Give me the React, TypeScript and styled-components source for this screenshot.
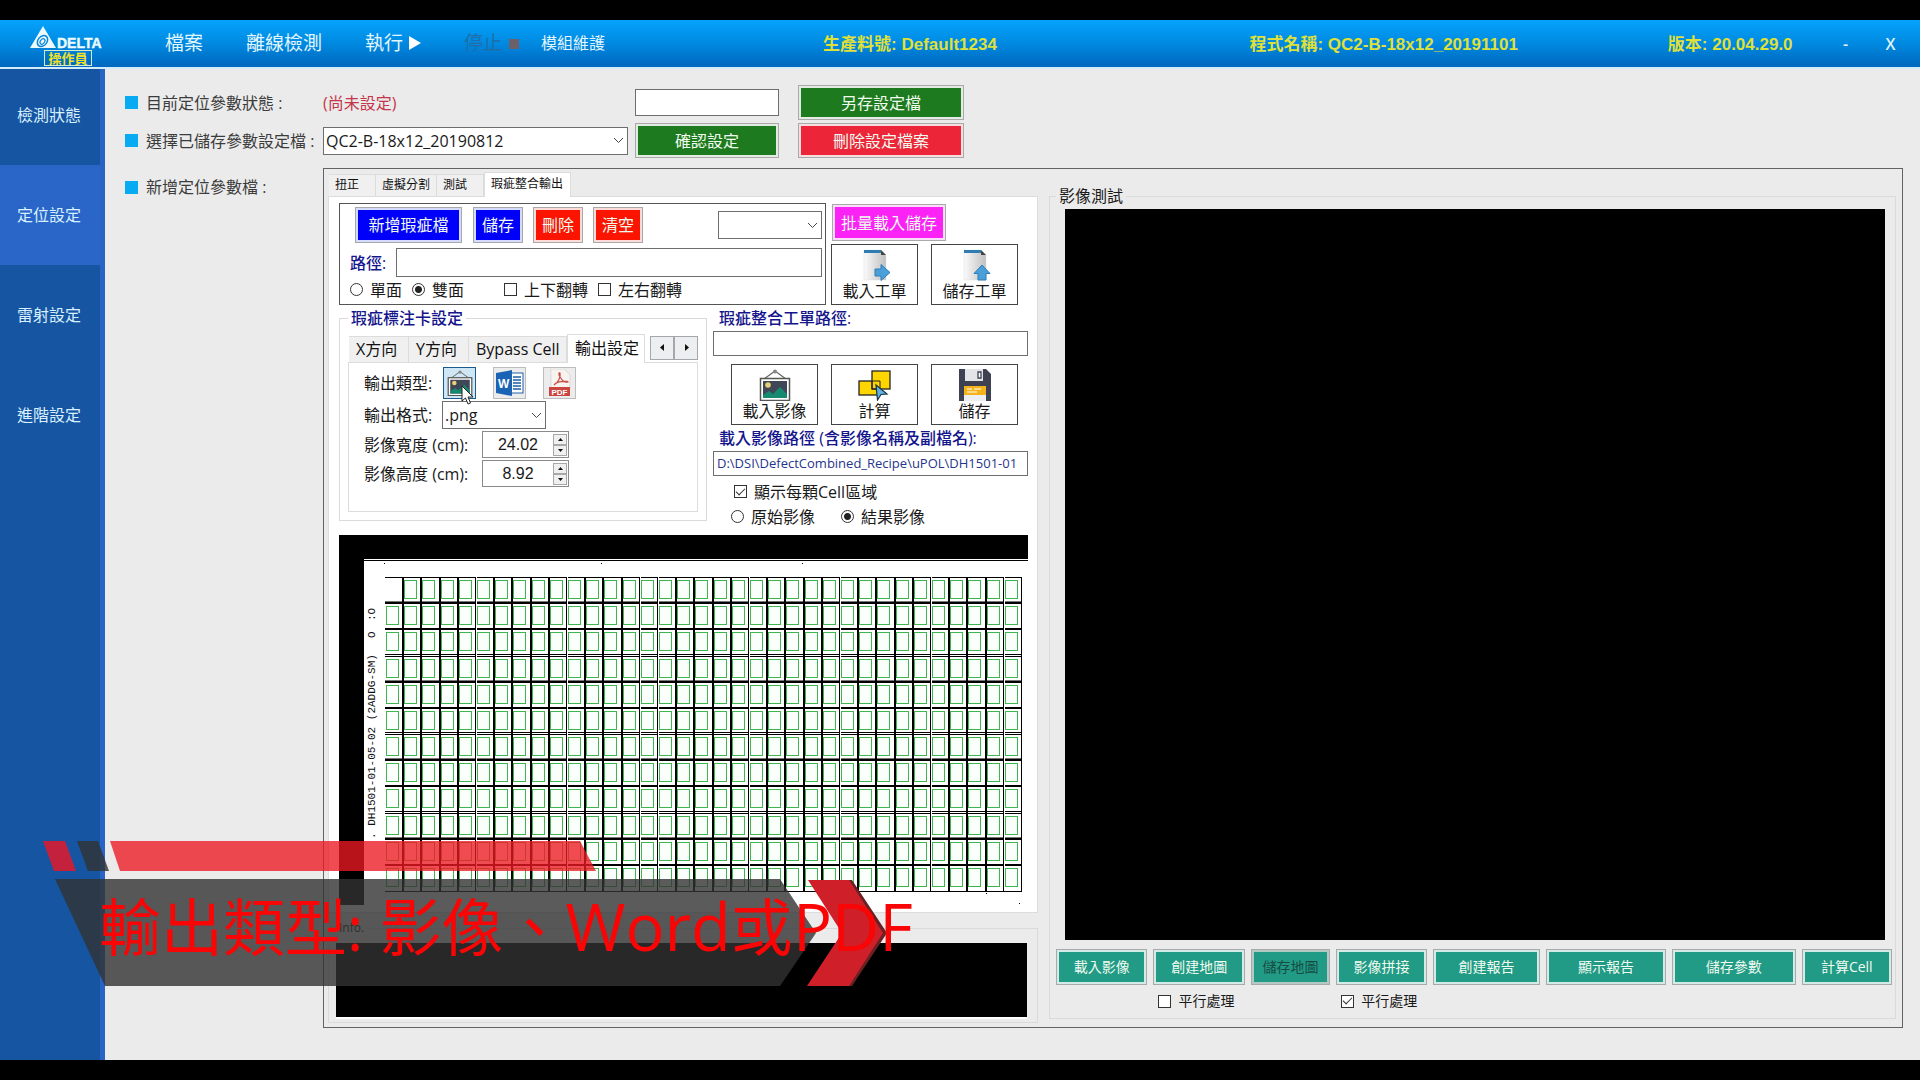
import React, { useState } from "react";
import styled, { createGlobalStyle, css } from "styled-components";

const UI_FONT = `"Open Sans", "Noto Sans CJK TC", sans-serif`;
const ARIAL_FONT = `"Liberation Sans", "Noto Sans CJK TC", sans-serif`;
const NAVY = "#14148c";

const GlobalStyle = createGlobalStyle`
  *, *::before, *::after { box-sizing: border-box; }
  body { margin: 0; background: #000; font-family: ${UI_FONT}; font-size: 16px; line-height: 24px; color: #1a1a1a; }
  button, input, select { font: inherit; color: inherit; margin: 0; }
  button { cursor: pointer; }
`;

const Screen = styled.div`
  position: relative;
  display: flex;
  flex-direction: column;
  min-height: 100vh;
  padding: 20px 0;
  background: #000;
`;

/* ---------- header ---------- */
const Header = styled.header`
  display: flex;
  align-items: center;
  height: 49px;
  padding-right: 7px;
  background: linear-gradient(#05a3fc, #0089e0 50%, #0067be);
  border-bottom: 2px solid #d3ecfa;
`;

const Brand = styled.div`
  display: flex;
  flex-direction: column;
  align-items: center;
  width: 132px;
  height: 47px;
  padding-top: 6px;
`;

const RoleBadge = styled.span`
  margin-left: 4px;
  padding: 0 3px;
  border: 1px solid #d8ecc8;
  font-size: 13px;
  line-height: 14px;
  font-weight: 700;
  color: #f0e02a;
`;

const Menu = styled.nav`
  display: flex;
  align-items: center;
  gap: 43px;
  padding: 0 0 2px 33px;
`;

const MenuButton = styled.button<{ $small?: boolean }>`
  display: flex;
  align-items: center;
  gap: 6px;
  padding: 0;
  border: 0;
  background: none;
  color: #e2f6ff;
  font-size: ${(p) => (p.$small ? 16 : 19)}px;
  margin-left: ${(p) => (p.$small ? -22 : 0)}px;
  white-space: nowrap;
  &:disabled { color: #1f6ea8; }
`;

const JobInfo = styled.div`
  flex: 1;
  display: grid;
  grid-template-columns: 426fr 418fr 155fr;
  padding-left: 218px;
  padding-top: 3px;
  font: 700 17px/24px ${ARIAL_FONT};
  color: #dfe03a;
  white-space: nowrap;
`;

const WindowButton = styled.button`
  width: 45px;
  padding: 0;
  border: 0;
  background: none;
  color: #dff2ff;
  font-weight: 600;
`;

/* ---------- body ---------- */
const Body = styled.div`
  flex: 1;
  display: flex;
  background: #ebebeb;
`;

const Sidebar = styled.nav`
  flex: none;
  width: 105px;
  display: flex;
  flex-direction: column;
  background: #1655a2;
  border-right: 5px solid #2a63c6;
`;

const SideButton = styled.button<{ $active?: boolean }>`
  height: 100px;
  padding: 0 2px 1px 0;
  border: 0;
  background: ${(p) => (p.$active ? "#2a66c8" : "transparent")};
  color: #d9f1ff;
  &:first-child { height: 96px; padding-bottom: 5px; }
`;

const Main = styled.main`
  flex: 1;
  min-width: 0;
  display: flex;
  flex-direction: column;
  gap: 10px;
  padding: 16px 17px 32px 20px;
`;

const Settings = styled.div`
  display: grid;
  grid-template-columns: 191px 305px 144px 178px;
  grid-template-rows: 35px 35px;
  gap: 3px 7px;
  align-items: center;
`;

const BulletLabel = styled.label`
  display: flex;
  align-items: center;
  gap: 8px;
  color: #3c3c3c;
  white-space: nowrap;
  &::before { content: ""; width: 13px; height: 13px; background: #06abf2; }
`;

const SectionLabel = styled(BulletLabel)`
  flex: none;
  width: 198px;
  height: 38px;
`;

const StatusText = styled.output`
  color: #c4364a;
`;

const SideAction = styled.div`
  padding-left: 12px;
  display: grid;
`;

const field = css`
  border: 1px solid #6e6e6e;
  border-radius: 0;
  background: #fff;
  outline: none;
`;

const TextField = styled.input<{ $h: number; $path?: boolean }>`
  ${field}
  width: 100%;
  min-width: 0;
  height: ${(p) => p.$h}px;
  padding: 0 3px;
  ${(p) => p.$path && css`padding-bottom: 2px; font-size: 13px; color: #26358c;`}
`;

const ComboWrap = styled.div<{ $w?: number }>`
  display: grid;
  align-items: center;
  width: ${(p) => (p.$w ? `${p.$w}px` : "100%")};
  > * { grid-area: 1 / 1; }
  > svg { justify-self: end; margin-right: 4px; pointer-events: none; }
`;

const ComboSelect = styled.select`
  ${field}
  appearance: none;
  width: 100%;
  height: 28px;
  padding: 0 18px 0 2px;
`;

const Btn = styled.button<{ $bg: string; $ring: string; $h?: number; $size?: number }>`
  height: ${(p) => p.$h ?? 35}px;
  padding: 0 5px;
  border: 1px solid #a9a9a9;
  background: ${(p) => p.$bg};
  box-shadow: inset 0 0 0 2px ${(p) => p.$ring};
  color: #f0fbf0;
  font-size: ${(p) => p.$size ?? 16}px;
  white-space: nowrap;
  &:disabled { color: #174c42; box-shadow: inset 0 0 0 2px #b4c8c4; }
`;

/* ---------- work area ---------- */
const WorkRow = styled.div`
  flex: 1;
  display: flex;
`;

const WorkBox = styled.section`
  flex: 1;
  min-width: 0;
  display: flex;
  gap: 11px;
  padding: 3px 6px 4px 4px;
  border: 1px solid #636363;
`;

const LeftColumn = styled.div`
  flex: none;
  width: 710px;
  display: flex;
  flex-direction: column;
`;

const TabStrip = styled.div<{ $h: number }>`
  display: flex;
  align-items: flex-end;
  height: ${(p) => p.$h}px;
  padding-left: 1px;
`;

const Tab = styled.button<{ $w: number; $active?: boolean; $large?: boolean }>`
  position: relative;
  width: ${(p) => p.$w}px;
  height: ${(p) => (p.$large ? 26 : 22) + (p.$active ? 3 : 0)}px;
  margin-bottom: ${(p) => (p.$active ? -1 : 0)}px;
  padding: 0 ${(p) => (p.$large ? 7 : 6)}px 2px;
  border: 1px solid #dcdcdc;
  border-left-width: ${(p) => (p.$active ? 1 : 0)}px;
  border-bottom: 0;
  background: ${(p) => (p.$active ? "#fff" : "#f0f0f0")};
  font-size: ${(p) => (p.$large ? 16 : 12)}px;
  line-height: 20px;
  text-align: left;
  white-space: nowrap;
  color: #111;
`;

const TabPage = styled.div`
  padding: 6px 9px 7px 10px;
  border: 1px solid #dcdcdc;
  background: #fff;
`;

const TopRow = styled.div`
  display: flex;
  gap: 5px;
  height: 102px;
`;

const FilePanel = styled.section`
  width: 487px;
  height: 102px;
  padding: 3px 3px 0 10px;
  border: 1px solid #555;
`;

const FileButtons = styled.div`
  display: flex;
  align-items: center;
  gap: 10px;
  padding-left: 5px;
  > :nth-child(1) { width: 107px; margin-right: 1px; }
  > :nth-child(n + 2) { width: 50px; }
  > :last-child { width: 104px; margin-left: auto; }
`;

const PathRow = styled.div`
  display: flex;
  align-items: center;
  gap: 10px;
  margin-top: 5px;
`;

const NavyLabel = styled.label`
  flex: none;
  color: ${NAVY};
  font-weight: 500;
  white-space: nowrap;
`;

const Ticks = styled.div<{ $pad: number; $gap: number }>`
  display: flex;
  align-items: center;
  gap: ${(p) => p.$gap}px;
  height: 25px;
  padding-left: ${(p) => p.$pad}px;
`;

const TickLabel = styled.label<{ $small?: boolean; $pad?: number }>`
  display: flex;
  align-items: center;
  gap: 7px;
  padding-left: ${(p) => p.$pad ?? 0}px;
  font-size: ${(p) => (p.$small ? 14 : 16)}px;
  white-space: nowrap;
`;

const Check = styled.input.attrs({ type: "checkbox" })`
  appearance: none;
  flex: none;
  display: grid;
  place-items: center;
  width: 13px;
  height: 13px;
  margin: 0;
  border: 1px solid #333;
  background: #fff;
  &:checked::before {
    content: "";
    width: 9px;
    height: 5px;
    margin-top: -3px;
    border: solid #333;
    border-width: 0 0 1px 1px;
    transform: rotate(-45deg);
  }
`;

const Radio = styled.input.attrs({ type: "radio" })`
  appearance: none;
  flex: none;
  width: 13px;
  height: 13px;
  margin: 0;
  border: 1px solid #333;
  border-radius: 50%;
  background: #fff;
  &:checked { background: radial-gradient(circle, #222 3px, #fff 4px); }
`;

const OrderColumn = styled.div`
  display: flex;
  flex-direction: column;
  align-items: stretch;
  gap: 3px;
  padding-top: 1px;
`;

const BatchButton = styled(Btn)`
  width: 114px;
  margin-left: 1px;
`;

const TileRow = styled.div<{ $pad?: number }>`
  display: flex;
  gap: 13px;
  padding-left: ${(p) => p.$pad ?? 0}px;
`;

const Tile = styled.button`
  display: flex;
  flex-direction: column;
  align-items: center;
  width: 87px;
  height: 61px;
  padding: 4px 0 0;
  border: 1px solid #444;
  background: #fff;
  line-height: 20px;
  > svg { flex: none; }
`;

const MiddleRow = styled.div`
  display: flex;
  align-items: flex-start;
  gap: 6px;
`;

const Group = styled.fieldset`
  min-width: 0;
  margin: 0;
  padding: 0;
  border: 1px solid #dadada;
`;

const Legend = styled.legend<{ $navy?: boolean }>`
  padding: 0 3px;
  ${(p) => p.$navy && css`color: ${NAVY}; font-weight: 500;`}
`;

const CardGroup = styled(Group)`
  width: 368px;
  margin-top: 1px;
  padding: 3px 8px 8px;
`;

const TabArrows = styled.div`
  display: flex;
  align-self: center;
  margin-left: 5px;
`;

const TabArrow = styled.button`
  display: grid;
  place-items: center;
  width: 24px;
  height: 24px;
  padding: 0;
  border: 1px solid #a3a8ad;
  background: #eceef0;
`;

const OutputPage = styled.div`
  display: flex;
  flex-direction: column;
  gap: 2px;
  height: 150px;
  padding: 4px 0 0 15px;
  border: 1px solid #dcdcdc;
`;

const OutputRow = styled.div<{ $label: number }>`
  display: grid;
  grid-template-columns: ${(p) => p.$label}px auto;
  justify-content: start;
  align-items: center;
  white-space: nowrap;
`;

const IconButtons = styled.div`
  display: flex;
  gap: 17px;
  padding-left: 1px;
`;

const IconButton = styled.button<{ $selected?: boolean }>`
  position: relative;
  display: grid;
  place-items: center;
  width: 33px;
  height: 32px;
  padding: 0;
  border: 1px solid ${(p) => (p.$selected ? "#1c5a8c" : "#bdbdbd")};
  background: ${(p) => (p.$selected ? "#cfe6f5" : "#ececec")};
`;

const Pointer = styled.svg`
  position: absolute;
  left: 17px;
  top: 17px;
  z-index: 1;
`;

const Spin = styled.div`
  display: flex;
  align-items: center;
  width: 87px;
  height: 27px;
  padding-right: 1px;
  border: 1px solid #8a8a8a;
  background: #fff;
`;

const SpinInput = styled.input`
  flex: 1;
  min-width: 0;
  padding: 0;
  border: 0;
  background: none;
  text-align: center;
  font-family: ${ARIAL_FONT};
  outline: none;
`;

const SpinButtons = styled.div`
  display: grid;
  grid-template-rows: 11px 11px;
  width: 14px;
`;

const SpinButton = styled.button`
  display: grid;
  place-items: center;
  padding: 0;
  border: 1px solid #a8a8a8;
  background: #f0f0f0;
`;

const PathColumn = styled.div`
  flex: 1;
  display: flex;
  flex-direction: column;
`;

const PathLabel = styled(NavyLabel)`
  padding-left: 6px;
  line-height: 26px;
`;

const TileGap = styled.div`
  padding-top: 8px;
`;

const OptionRows = styled.div`
  padding-top: 3px;
`;

const PreviewArt = styled.svg`
  display: block;
  width: 100%;
  height: auto;
  margin-top: 6px;
`;

const InfoGroup = styled(Group)`
  flex: 1;
  display: flex;
  flex-direction: column;
  margin-top: 8px;
  padding: 8px 10px 3px 7px;
`;

const InfoLegend = styled(Legend)`
  font-size: 12px;
  line-height: 14px;
`;

const InfoLog = styled.div`
  flex: 1;
  border-bottom: 2px solid #fff;
  background: #000;
`;

const TestGroup = styled(Group)`
  flex: 1;
  display: flex;
  flex-direction: column;
  gap: 9px;
  margin: 13px 0 4px;
  padding: 2px 3px 3px 6px;
`;

const TestLegend = styled(Legend)`
  line-height: 22px;
`;

const TestScreen = styled.div`
  flex: 1;
  margin: 0 7px 0 9px;
  background: #000;
`;

const ActionGrid = styled.div`
  display: grid;
  grid-template-columns: 91fr 91fr 79fr 90fr 107fr 119fr 123fr 90fr;
  grid-template-rows: 36px 28px;
  column-gap: 6px;
  row-gap: 2px;
`;

/* ---------- caption banner ---------- */
const Banner = styled.div`
  position: absolute;
  left: 0;
  top: 838px;
  display: grid;
  width: 930px;
  height: 152px;
  pointer-events: none;
  > * { grid-area: 1 / 1; }
`;

const BannerText = styled.p`
  margin: 0;
  padding: 43px 0 0 99px;
  font-size: 62px;
  line-height: 90px;
  color: #f90505;
  white-space: nowrap;
`;

const BannerLatin = styled.span`
  font-size: 65px;
`;

const Chevron = () => (
  <svg width="11" height="7" viewBox="0 0 11 7" fill="none" stroke="#444" strokeWidth="1">
    <path d="M1 1l4.500 4.500L10 1" />
  </svg>
);

const DeltaLogo = () => (
  <svg width="72" height="24" viewBox="0 0 72 24">
    <path d="M13 0L26 22H0z" fill="#eafaff" />
    <ellipse cx="12.500" cy="15" rx="6" ry="4.500" transform="rotate(-50 12.500 15)" fill="#eafaff" stroke="#0a84da" strokeWidth="1.500" />
    <ellipse cx="12.500" cy="15.500" rx="3" ry="2" transform="rotate(-50 12.500 15.500)" fill="none" stroke="#0a84da" strokeWidth="1.200" />
    <text x="27" y="22" fontFamily="Liberation Sans, sans-serif" fontWeight="700" fontSize="14" fill="#eafaff" stroke="#eafaff" strokeWidth=".4">DELTA</text>
  </svg>
);

const PictureArt = ({ size }: { size: number }) => (
  <svg width={size} height={size} viewBox="0 0 32 32">
    <path d="M5 10L16 2l11 8" fill="none" stroke="#666" strokeWidth="1.200" />
    <circle cx="16" cy="2.500" r="2" fill="#888" />
    <rect x="1.500" y="9.500" width="29" height="22" fill="#fff" stroke="#555" strokeWidth="1.500" />
    <rect x="4" y="12" width="24" height="17" fill="#3f4656" />
    <circle cx="9" cy="16" r="2.800" fill="#e9cf78" />
    <path d="M4 29v-3l6-4 4 3 7-7 7 7v4z" fill="#168a70" />
  </svg>
);

const SheetArt = ({ up }: { up?: boolean }) => (
  <svg width="32" height="32" viewBox="0 0 32 32">
    <defs>
      <linearGradient id="sheet" x1="0" x2="1"><stop stopColor="#fafafa" /><stop offset="1" stopColor="#c0c0c0" /></linearGradient>
    </defs>
    <path d="M5 1h17l5 5v25H5z" fill="url(#sheet)" stroke="#ddd" strokeWidth=".5" />
    <path d="M5 1h17v3H5z" fill="#2f7db3" />
    <path d="M22 1l5 5h-5z" fill="#444" />
    {up ? (
      <path d="M23 16l8 8.500h-4v6.500h-8v-6.500h-4z" fill="#4a9fd8" stroke="#2c7db8" />
    ) : (
      <path d="M16 20h6v-4.500l9 8-9 8v-4.500h-6z" fill="#4a9fd8" stroke="#2c7db8" />
    )}
  </svg>
);

const CalcArt = () => (
  <svg width="34" height="32" viewBox="0 0 34 32">
    <rect x="1" y="12" width="21" height="14" fill="#ffd500" stroke="#222" strokeWidth="1.300" />
    <rect x="14" y="2" width="18" height="18" fill="#ffd500" stroke="#222" strokeWidth="1.300" />
    <path d="M14 12h8v8h-8z" fill="none" stroke="#222" />
    <path d="M18 16l11 9-6 .5-3.500 5.500z" fill="#63b4dc" stroke="#1a3347" strokeWidth="1.200" />
  </svg>
);

const FloppyArt = () => (
  <svg width="32" height="32" viewBox="0 0 32 32">
    <path d="M0 0h27l5 5v27H0z" fill="#3d4152" />
    <path d="M6 0h18v12H6z" fill="#e2e4e8" />
    <path d="M19 3h3v6h-3z" fill="#fff" stroke="#3d4152" strokeWidth="1.300" />
    <path d="M5 17h22v9H5z" fill="#f6b21b" />
    <path d="M5 26h22v6H5z" fill="#eceef0" />
    <path d="M8 20h5m2 0h7M8 23h10" stroke="#fff" strokeWidth="1.200" />
  </svg>
);

const WordArt = () => (
  <svg width="28" height="26" viewBox="0 0 28 26">
    <rect x="12" y="3" width="15" height="20" fill="#fff" stroke="#1f5fa9" />
    <path d="M17 7h8M17 10h8M17 13h8M17 16h8M17 19h8" stroke="#1f5fa9" strokeWidth="1.300" />
    <path d="M0 3l16-3v26L0 23z" fill="#1b63b4" />
    <text x="2" y="18" fontFamily="Liberation Sans, sans-serif" fontWeight="700" fontSize="12" fill="#fff">W</text>
  </svg>
);

const PdfArt = () => (
  <svg width="24" height="28" viewBox="0 0 24 28">
    <path d="M3 0h13l6 6v14H3z" fill="#f6f3f1" stroke="#d5d0cc" strokeWidth=".7" />
    <path d="M6 16c4-2 7-8 6-12-1-1-2 1 0 4s4 6 8 5c1-1-8-1-12 1z" fill="none" stroke="#cf4a43" strokeWidth="1.200" />
    <path d="M1 18h21v9H1z" fill="#cc4440" />
    <text x="11.500" y="25.500" textAnchor="middle" fontFamily="Liberation Sans, sans-serif" fontWeight="700" fontSize="8" fill="#fff">PDF</text>
  </svg>
);

const Triangle = ({ d }: { d: string }) => (
  <svg width="7" height="7" viewBox="0 0 7 7"><path d={d} fill="#111" /></svg>
);

/* Panel map of the strip: 35 x 12 cells, the first one left blank. */
const COLS = 35;
const ROWS = 12;
const gridX = (c: number) => Math.round(46 + (c * 637) / COLS);
const gridY = (r: number) => Math.round(42 + (r * 314) / ROWS);

const Preview = () => {
  const cells: React.ReactNode[] = [];
  for (let r = 0; r < ROWS; r++) {
    for (let c = 0; c < COLS; c++) {
      if (r === 0 && c === 0) continue;
      cells.push(<rect key={`${r}-${c}`} x={gridX(c) + 1.5} y={gridY(r) + 3.5} width="12" height="18" />);
    }
  }
  const text = { fontFamily: "Liberation Mono, monospace", fontSize: 11, fill: "#111" };
  return (
    <PreviewArt viewBox="0 0 689 370" role="img" aria-label="瑕疵標注卡">
      <rect width="689" height="370" />
      <rect x="25" y="24" width="664" height="346" fill="#fff" />
      <path d="M25 25.500H689" stroke="#000" />
      <path d="M45 28h1v1h-1zM262 28h1v1h-1zM463 28h1v1h-1zM647 358h1v1h-1zM680 368h1v1h-1z" />
      <g shapeRendering="crispEdges">
        {Array.from({ length: ROWS + 1 }, (_, r) => {
          const y = gridY(r);
          const edge = r === 0 || r === ROWS;
          return (
            <g key={r}>
              <rect x="46" y={edge ? y : y - 1} width="637" height={edge ? 1 : 2} />
              {!edge && r % 3 === 1 && <rect x="46" y={y - 2} width="637" height="1" fill="#777" />}
              {!edge && r % 3 === 0 && <rect x="46" y={y - 1} width="637" height="1" fill="#fff" />}
              {!edge && r % 3 === 0 && <rect x="46" y={y - 2} width="637" height="1" />}
            </g>
          );
        })}
        {Array.from({ length: COLS }, (_, i) => {
          const c = i + 1;
          const thin = c % 5 === 0 || c === 14 || c === 34;
          return (
            <g key={c}>
              <rect x={gridX(c) - 1} y="42" width={thin ? 1 : 2} height="314" />
              {thin && c < COLS && <rect x={gridX(c)} y="42" width="1" height="314" fill="#fff" />}
            </g>
          );
        })}
        <g fill="#fbfffb" stroke="#3fb54f">{cells}</g>
      </g>
      <g transform="rotate(-90)">
        <text x="-304" y="36" {...text}>. DH1501-01-05-02 (2ADDG-SM)</text>
        <text x="-103" y="36" {...text}>O</text>
        <text x="-86" y="36" {...text}>:O</text>
      </g>
    </PreviewArt>
  );
};

const BannerArt = () => (
  <svg width="930" height="152" viewBox="0 838 930 152">
    <path d="M43 841h22l11 30H54z" fill="#d41d33" fillOpacity=".92" />
    <path d="M77 841h21l11 30H88z" fill="#323232" fillOpacity=".8" />
    <path d="M110 841H580l16 30H120z" fill="#ec1821" fillOpacity=".78" />
    <path d="M55 879H780L816 933L780 986H105z" fill="#323232" fillOpacity=".8" />
    <path d="M812 880h40l35 53-35 53h-40l34-53z" fill="#6b2024" />
    <path d="M808 880h41l34 53-34 53h-42l35-53z" fill="#cf2029" />
  </svg>
);

const GREEN = { $bg: "#1e7a1e", $ring: "#e2ece2" };
const BLUE = { $bg: "#0000fa", $ring: "#d5dbff", $h: 36 };
const RED = { $bg: "#fb1400", $ring: "#fddbd8", $h: 36 };
const TEAL = { $bg: "#219a86", $ring: "#d2ebe6", $h: 36, $size: 14 };

const Stepper = ({ id, initial }: { id: string; initial: number }) => {
  const [value, setValue] = useState(initial.toFixed(2));
  const step = (d: number) => setValue((Number(value) + d).toFixed(2));
  return (
    <Spin>
      <SpinInput id={id} value={value} inputMode="decimal" onChange={(e) => setValue(e.target.value)} />
      <SpinButtons>
        <SpinButton aria-label="增加" onClick={() => step(0.01)}><Triangle d="M1 5l2.500-3L6 5z" /></SpinButton>
        <SpinButton aria-label="減少" onClick={() => step(-0.01)}><Triangle d="M1 2l2.500 3L6 2z" /></SpinButton>
      </SpinButtons>
    </Spin>
  );
};

const Combo = ({ id, label, options, w }: { id?: string; label?: string; options: string[]; w?: number }) => (
  <ComboWrap $w={w}>
    <ComboSelect id={id} aria-label={label}>
      {options.map((o) => <option key={o}>{o}</option>)}
    </ComboSelect>
    <Chevron />
  </ComboWrap>
);

export default function App() {
  return (
    <Screen>
      <GlobalStyle />
      <Header>
        <Brand>
          <DeltaLogo />
          <RoleBadge>操作員</RoleBadge>
        </Brand>
        <Menu>
          <MenuButton>檔案</MenuButton>
          <MenuButton>離線檢測</MenuButton>
          <MenuButton>
            執行
            <svg width="12" height="14" viewBox="0 0 12 14"><path d="M0 0l12 7-12 7z" fill="#fff" /></svg>
          </MenuButton>
          <MenuButton disabled>
            停止
            <svg width="12" height="12" viewBox="0 0 12 12"><path d="M1 2h10v10H1z" fill="#6b5f6a" /></svg>
          </MenuButton>
          <MenuButton $small>模組維護</MenuButton>
        </Menu>
        <JobInfo>
          <span>生產料號: Default1234</span>
          <span>程式名稱: QC2-B-18x12_20191101</span>
          <span>版本: 20.04.29.0</span>
        </JobInfo>
        <WindowButton>-</WindowButton>
        <WindowButton>X</WindowButton>
      </Header>

      <Body>
        <Sidebar>
          <SideButton>檢測狀態</SideButton>
          <SideButton $active>定位設定</SideButton>
          <SideButton>雷射設定</SideButton>
          <SideButton>進階設定</SideButton>
        </Sidebar>

        <Main>
          <Settings>
            <BulletLabel htmlFor="state">目前定位參數狀態 :</BulletLabel>
            <StatusText id="state">(尚未設定)</StatusText>
            <TextField $h={27} aria-label="設定檔名稱" />
            <SideAction><Btn {...GREEN}>另存設定檔</Btn></SideAction>
            <BulletLabel htmlFor="recipe">選擇已儲存參數設定檔 :</BulletLabel>
            <Combo id="recipe" options={["QC2-B-18x12_20190812"]} />
            <Btn {...GREEN}>確認設定</Btn>
            <SideAction><Btn $bg="#ec2638" $ring="#f7dede">刪除設定檔案</Btn></SideAction>
          </Settings>

          <WorkRow>
            <SectionLabel as="div">新增定位參數檔 :</SectionLabel>
            <WorkBox>
              <LeftColumn>
                <TabStrip $h={24}>
                  <Tab $w={47}>扭正</Tab>
                  <Tab $w={61}>虛擬分割</Tab>
                  <Tab $w={47}>測試</Tab>
                  <Tab $w={87} $active>瑕疵整合輸出</Tab>
                </TabStrip>
                <TabPage>
                  <TopRow>
                    <FilePanel>
                      <FileButtons>
                        <Btn {...BLUE}>新增瑕疵檔</Btn>
                        <Btn {...BLUE}>儲存</Btn>
                        <Btn {...RED}>刪除</Btn>
                        <Btn {...RED}>清空</Btn>
                        <Combo label="瑕疵檔" options={[""]} />
                      </FileButtons>
                      <PathRow>
                        <NavyLabel htmlFor="path">路徑:</NavyLabel>
                        <TextField id="path" $h={29} />
                      </PathRow>
                      <Ticks $pad={0} $gap={10}>
                        <TickLabel><Radio name="side" />單面</TickLabel>
                        <TickLabel><Radio name="side" defaultChecked />雙面</TickLabel>
                        <TickLabel $pad={30}><Check />上下翻轉</TickLabel>
                        <TickLabel><Check />左右翻轉</TickLabel>
                      </Ticks>
                    </FilePanel>
                    <OrderColumn>
                      <BatchButton $bg="#fb22f5" $ring="#fbdcfb" $h={37}>批量載入儲存</BatchButton>
                      <TileRow>
                        <Tile><SheetArt />載入工單</Tile>
                        <Tile><SheetArt up />儲存工單</Tile>
                      </TileRow>
                    </OrderColumn>
                  </TopRow>

                  <MiddleRow>
                    <CardGroup>
                      <Legend $navy>瑕疵標注卡設定</Legend>
                      <TabStrip $h={29}>
                        <Tab $large $w={60}>X方向</Tab>
                        <Tab $large $w={60}>Y方向</Tab>
                        <Tab $large $w={98}>Bypass Cell</Tab>
                        <Tab $large $w={78} $active>輸出設定</Tab>
                        <TabArrows>
                          <TabArrow aria-label="上一頁籤"><Triangle d="M5 0v7L1 3.500z" /></TabArrow>
                          <TabArrow aria-label="下一頁籤"><Triangle d="M2 0v7l4-3.500z" /></TabArrow>
                        </TabArrows>
                      </TabStrip>
                      <OutputPage>
                        <OutputRow $label={78}>
                          <span>輸出類型:</span>
                          <IconButtons>
                            <IconButton $selected aria-label="影像">
                              <PictureArt size={26} />
                              <Pointer width="14" height="20" viewBox="0 0 14 20">
                                <path d="M1 1v15l3.500-3 2.500 6 2.500-1-2.500-6H12z" fill="#fff" stroke="#222" />
                              </Pointer>
                            </IconButton>
                            <IconButton aria-label="Word"><WordArt /></IconButton>
                            <IconButton aria-label="PDF"><PdfArt /></IconButton>
                          </IconButtons>
                        </OutputRow>
                        <OutputRow $label={78}>
                          <label htmlFor="format">輸出格式:</label>
                          <Combo id="format" w={104} options={[".png"]} />
                        </OutputRow>
                        <OutputRow $label={118}>
                          <label htmlFor="width">影像寬度 (cm):</label>
                          <Stepper id="width" initial={24.02} />
                        </OutputRow>
                        <OutputRow $label={118}>
                          <label htmlFor="height">影像高度 (cm):</label>
                          <Stepper id="height" initial={8.92} />
                        </OutputRow>
                      </OutputPage>
                    </CardGroup>

                    <PathColumn>
                      <PathLabel htmlFor="order">瑕疵整合工單路徑:</PathLabel>
                      <TextField id="order" $h={25} />
                      <TileGap>
                        <TileRow $pad={18}>
                          <Tile><PictureArt size={32} />載入影像</Tile>
                          <Tile><CalcArt />計算</Tile>
                          <Tile><FloppyArt />儲存</Tile>
                        </TileRow>
                      </TileGap>
                      <PathLabel htmlFor="image">載入影像路徑 (含影像名稱及副檔名):</PathLabel>
                      <TextField id="image" $h={25} $path defaultValue="D:\DSI\DefectCombined_Recipe\uPOL\DH1501-01" />
                      <OptionRows>
                        <Ticks $pad={21} $gap={0}>
                          <TickLabel><Check defaultChecked />顯示每顆Cell區域</TickLabel>
                        </Ticks>
                        <Ticks $pad={18} $gap={26}>
                          <TickLabel><Radio name="view" />原始影像</TickLabel>
                          <TickLabel><Radio name="view" defaultChecked />結果影像</TickLabel>
                        </Ticks>
                      </OptionRows>
                    </PathColumn>
                  </MiddleRow>
                  <Preview />
                </TabPage>
                <InfoGroup>
                  <InfoLegend>Info.</InfoLegend>
                  <InfoLog />
                </InfoGroup>
              </LeftColumn>

              <TestGroup>
                <TestLegend>影像測試</TestLegend>
                <TestScreen />
                <ActionGrid>
                  <Btn {...TEAL}>載入影像</Btn>
                  <Btn {...TEAL}>創建地圖</Btn>
                  <Btn {...TEAL} disabled>儲存地圖</Btn>
                  <Btn {...TEAL}>影像拼接</Btn>
                  <Btn {...TEAL}>創建報告</Btn>
                  <Btn {...TEAL}>顯示報告</Btn>
                  <Btn {...TEAL}>儲存參數</Btn>
                  <Btn {...TEAL}>計算Cell</Btn>
                  <span />
                  <TickLabel $small $pad={5}><Check />平行處理</TickLabel>
                  <span />
                  <TickLabel $small $pad={5}><Check defaultChecked />平行處理</TickLabel>
                </ActionGrid>
              </TestGroup>
            </WorkBox>
          </WorkRow>
        </Main>
      </Body>

      <Banner>
        <BannerArt />
        <BannerText>輸出類型: 影像、<BannerLatin>Word</BannerLatin>或<BannerLatin>PDF</BannerLatin></BannerText>
      </Banner>
    </Screen>
  );
}
